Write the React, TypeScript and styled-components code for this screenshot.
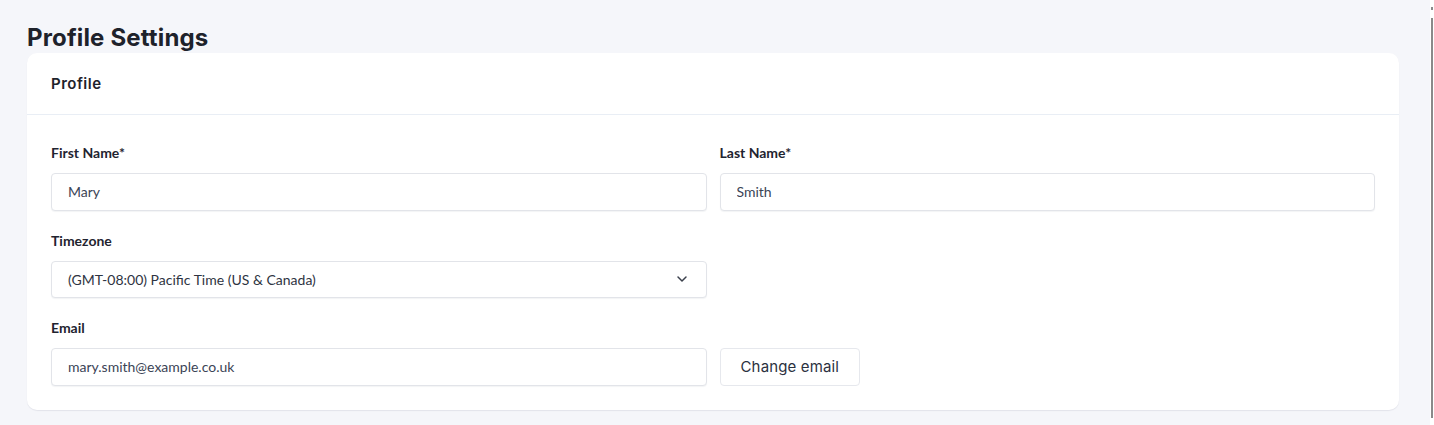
import React from 'react';
import styled, { createGlobalStyle } from 'styled-components';

const GlobalStyle = createGlobalStyle`
    * { box-sizing: border-box; }
    html, body {
        margin: 0;
        padding: 0;
        background: #f5f6fa;
    }
    body {
        font-family: 'Lato', 'Liberation Sans', sans-serif;
        color: #1f2430;
    }
`;

const Shell = styled.div`
    display: flex;
    width: 100%;
    min-height: 425px;
`;

const Main = styled.main`
    flex: 1;
    padding: 22px 31px 0 27px;
`;

const Rail = styled.div`
    width: 4px;
    background: #ffffff;
    display: flex;
    flex-direction: column;
    align-items: flex-end;
    padding-top: 7px;
`;

const RailMark = styled.div<{ $h: number; $gap?: number }>`
    width: 2px;
    height: ${(p) => p.$h}px;
    margin-top: ${(p) => p.$gap || 0}px;
    margin-right: 1px;
    background: #8a8a8a;
`;

const PageTitle = styled.h1`
    margin: 0;
    font-family: 'Inter', 'Liberation Sans', sans-serif;
    font-size: 24px;
    line-height: 31px;
    font-weight: 700;
    letter-spacing: 0.15px;
    color: #1e222b;
`;

const Card = styled.section`
    background: #ffffff;
    border-radius: 10px;
    box-shadow: 0 1px 1px rgba(20, 30, 60, 0.08);
`;

const CardHeader = styled.header`
    height: 62px;
    padding: 0 24px;
    display: flex;
    align-items: center;
    border-bottom: 1px solid #e9eef5;
`;

const CardTitle = styled.h2`
    margin: 0;
    font-family: 'Inter', 'Liberation Sans', sans-serif;
    font-size: 15px;
    font-weight: 600;
    letter-spacing: 0.5px;
    color: #1e222b;
`;

const CardBody = styled.div`
    padding: 28px 24px 24px;
    display: grid;
    grid-template-columns: 1fr 1fr;
    column-gap: 13px;
    row-gap: 20px;
`;

const Field = styled.div`
    display: flex;
    flex-direction: column;
`;

const Label = styled.label`
    font-size: 14px;
    line-height: 20px;
    font-weight: 700;
    color: #1f2430;
    margin-bottom: 10px;
`;

const Input = styled.input`
    height: 37.5px;
    width: 100%;
    padding: 0 16px;
    border: 1px solid #e2e4e9;
    border-radius: 4px;
    background: #ffffff;
    box-shadow: 0 1px 1px rgba(20, 30, 60, 0.05);
    font-family: 'Lato', 'Liberation Sans', sans-serif;
    font-size: 14px;
    color: #3b4456;
    outline: none;
`;

const SelectBox = styled.div`
    height: 37.5px;
    padding: 0 16px;
    border: 1px solid #e2e4e9;
    border-radius: 4px;
    background: #ffffff;
    box-shadow: 0 1px 1px rgba(20, 30, 60, 0.05);
    display: flex;
    align-items: center;
    justify-content: space-between;
    font-size: 14px;
    color: #2e3442;
`;

const Chevron = styled.svg`
    width: 16px;
    height: 16px;
    margin-right: 0;
    color: #3a3f4b;
`;

const InlineRow = styled.div`
    display: flex;
    align-items: flex-end;
`;

const Button = styled.button`
    height: 37.5px;
    padding: 0 20px;
    border: 1px solid #e6e8ed;
    border-radius: 4px;
    background: #ffffff;
    font-family: 'Inter', 'Liberation Sans', sans-serif;
    font-size: 15px;
    letter-spacing: 0.15px;
    color: #2b3140;
    cursor: pointer;
`;

export default function App() {
    return (
        <>
            <GlobalStyle />
            <Shell>
                <Main>
                    <PageTitle>Profile Settings</PageTitle>
                    <Card>
                        <CardHeader>
                            <CardTitle>Profile</CardTitle>
                        </CardHeader>
                        <CardBody>
                            <Field>
                                <Label>First Name*</Label>
                                <Input defaultValue="Mary" />
                            </Field>
                            <Field>
                                <Label>Last Name*</Label>
                                <Input defaultValue="Smith" />
                            </Field>
                            <Field>
                                <Label>Timezone</Label>
                                <SelectBox>
                                    <span>(GMT-08:00) Pacific Time (US &amp; Canada)</span>
                                    <Chevron viewBox="0 0 24 24" fill="none" stroke="currentColor" strokeWidth="2.2" strokeLinecap="round" strokeLinejoin="round">
                                        <path d="M6 9l6 6 6-6" />
                                    </Chevron>
                                </SelectBox>
                            </Field>
                            <div />
                            <Field>
                                <Label>Email</Label>
                                <Input defaultValue="mary.smith@example.co.uk" />
                            </Field>
                            <InlineRow>
                                <Button>Change email</Button>
                            </InlineRow>
                        </CardBody>
                    </Card>
                </Main>
                <Rail>
                    <RailMark $h={3} />
                    <RailMark $h={400} $gap={8} />
                </Rail>
            </Shell>
        </>
    );
}
